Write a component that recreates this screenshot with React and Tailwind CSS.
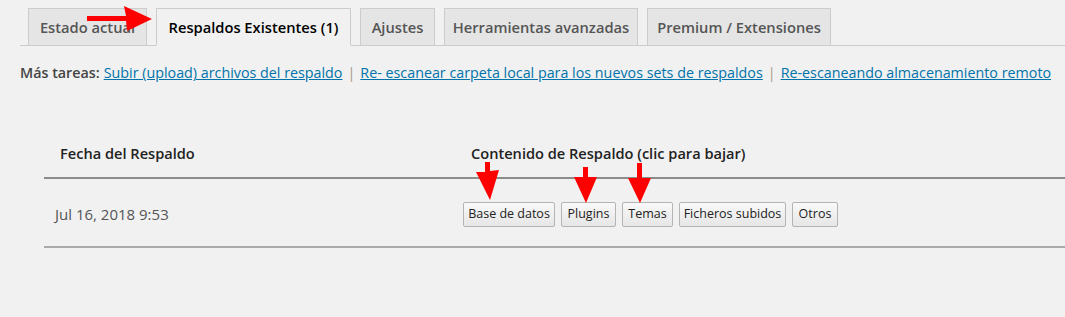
import React from "react";

const tabs = [
  { label: "Estado actual", w: "w-[119px]", active: false },
  { label: "Respaldos Existentes (1)", w: "w-[195px]", active: true },
  { label: "Ajustes", w: "w-[75px]", active: false },
  { label: "Herramientas avanzadas", w: "w-[194px]", active: false },
  { label: "Premium / Extensiones", w: "w-[184px]", active: false },
];

const links = [
  "Subir (upload) archivos del respaldo",
  "Re- escanear carpeta local para los nuevos sets de respaldos",
  "Re-escaneando almacenamiento remoto",
];

const botones = [
  { label: "Base de datos", w: "w-[92px]" },
  { label: "Plugins", w: "w-[55px]" },
  { label: "Temas", w: "w-[51px]" },
  { label: "Ficheros subidos", w: "w-[107px]" },
  { label: "Otros", w: "w-[46px]" },
];

function Flechas() {
  return (
    <svg
      className="absolute left-0 top-0 pointer-events-none"
      width="1065"
      height="317"
      viewBox="0 0 1065 317"
    >
      <g fill="#ff0000">
        {/* flecha horizontal hacia la pestaña */}
        <polygon points="87,16 126,16 124,6 152,19 127,31 126,21 87,21" />
        {/* flechas hacia abajo */}
        <polygon points="485,162 490,162 490,171 499,170 490,200 476,172 485,172" />
        <polygon points="583,167 588,167 588,177 597,177 586,203 574,177 583,177" />
        <polygon points="637,163 642,163 642,178 651,178 640,203 628,178 637,178" />
      </g>
    </svg>
  );
}

export default function App() {
  return (
    <div
      className="relative w-[1065px] h-[317px] overflow-hidden bg-[#f1f1f1] text-[#444]"
      style={{ fontFamily: '"Open Sans", "Liberation Sans", sans-serif' }}
    >
      <div className="pt-[8px] ml-[20px] flex gap-[9px] pl-[8px] border-b border-[#ccc]">
        {tabs.map((t) =>
          t.active ? (
            <div
              key={t.label}
              className={`${t.w} h-[38px] -mb-px flex items-center justify-center border border-[#ccc] border-b-[#f1f1f1] bg-[#f1f1f1] text-[14.7px] font-semibold text-black whitespace-nowrap`}
            >
              {t.label}
            </div>
          ) : (
            <div
              key={t.label}
              className={`${t.w} h-[38px] -mb-px flex items-center justify-center border border-[#ccc] bg-[#e5e5e5] text-[14.7px] font-semibold text-[#555] whitespace-nowrap`}
            >
              {t.label}
            </div>
          )
        )}
      </div>

      <div className="mt-[16px] ml-[20px] flex items-center text-[14.3px] whitespace-nowrap">
        <span className="font-semibold text-[#444] mr-[4px]">Más tareas:</span>
        {links.map((l, i) => (
          <React.Fragment key={l}>
            {i > 0 && <span className="mx-[5px] text-[#a89a88]">|</span>}
            <a href="#" className="text-[#0073aa] underline">
              {l}
            </a>
          </React.Fragment>
        ))}
      </div>

      <div className="mt-[56px] ml-[44px]">
        <div className="flex items-end h-[40px] pb-[13px] border-b-2 border-[#8c8c8c] text-[14.6px] font-semibold text-[#222]">
          <div className="w-[427px] pl-[16px]">Fecha del Respaldo</div>
          <div>Contenido de Respaldo (clic para bajar)</div>
        </div>
        <div className="flex items-center h-[69px] pt-[3px] border-b-2 border-[#aaa]">
          <div className="w-[419px] pl-[11px] text-[15px] text-[#555]">Jul 16, 2018 9:53</div>
          <div className="flex gap-[6px]">
            {botones.map((b) => (
              <button
                key={b.label}
                className={`${b.w} h-[25px] border border-[#b4b4b4] rounded-[2px] bg-gradient-to-b from-[#f9f9f9] to-[#e6e6e6] text-[12.5px] text-[#222] leading-none whitespace-nowrap`}
              >
                {b.label}
              </button>
            ))}
          </div>
        </div>
      </div>

      <Flechas />
    </div>
  );
}
